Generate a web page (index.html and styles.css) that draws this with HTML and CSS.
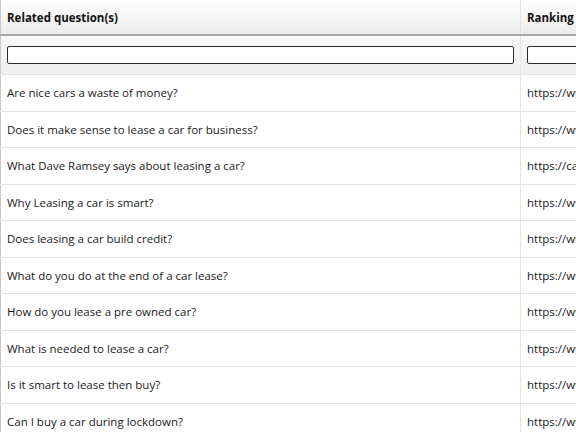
FILE: index.html
```html
<!DOCTYPE html>
<html>
<head>
<meta charset="utf-8">
<link rel="stylesheet" href="styles.css">
</head>
<body>
<table class="grid">
  <thead>
    <tr class="head">
      <th class="c1">Related question(s)</th>
      <th class="c2">Ranking</th>
    </tr>
    <tr class="filter">
      <td class="c1"><input class="box" type="text"></td>
      <td class="c2"><input class="box" type="text"></td>
    </tr>
  </thead>
  <tbody>
    <tr><td class="c1">Are nice cars a waste of money?</td><td class="c2">https://www.example.com/</td></tr>
    <tr><td class="c1">Does it make sense to lease a car for business?</td><td class="c2">https://www.example.com/</td></tr>
    <tr><td class="c1">What Dave Ramsey says about leasing a car?</td><td class="c2">https://cars.example.com/</td></tr>
    <tr><td class="c1">Why Leasing a car is smart?</td><td class="c2">https://www.example.com/</td></tr>
    <tr><td class="c1">Does leasing a car build credit?</td><td class="c2">https://www.example.com/</td></tr>
    <tr><td class="c1">What do you do at the end of a car lease?</td><td class="c2">https://www.example.com/</td></tr>
    <tr><td class="c1">How do you lease a pre owned car?</td><td class="c2">https://www.example.com/</td></tr>
    <tr><td class="c1">What is needed to lease a car?</td><td class="c2">https://www.example.com/</td></tr>
    <tr><td class="c1">Is it smart to lease then buy?</td><td class="c2">https://www.example.com/</td></tr>
    <tr><td class="c1">Can I buy a car during lockdown?</td><td class="c2">https://www.example.com/</td></tr>
  </tbody>
</table>
</body>
</html>
```
FILE: styles.css
```css
html, body {
  margin: 0;
  padding: 0;
  background: #fff;
  overflow: hidden;
}
body {
  width: 576px;
  height: 432px;
  font-family: "Open Sans", "DejaVu Sans", sans-serif;
  font-size: 11.5px;
  color: #1a1a1a;
}
.grid {
  border-collapse: collapse;
  table-layout: fixed;
  width: 800px;
  border-left: 1px solid #c8c8c8;
}
.c1 { width: 507px; }
.c2 { width: 280px; }
.grid th, .grid td {
  text-align: left;
  white-space: nowrap;
  overflow: hidden;
  padding: 0 6px;
  border-right: 1px solid #e4e4e4;
}
.head th {
  height: 34px;
  font-weight: bold;
  color: #111;
  background: linear-gradient(#ffffff, #ebebeb);
  border-bottom: 2px solid #a8a8a8;
}
.filter td {
  height: 38px;
  background: linear-gradient(#f7f7f7, #efefef);
  border-bottom: 1px solid #e4e4e4;
}
.box {
  display: block;
  box-sizing: border-box;
  width: 100%;
  height: 18px;
  margin: 0;
  border: 1px solid #2a2a2a;
  border-radius: 2px;
  background: #fff;
  padding: 0 3px;
}
tbody td {
  height: 35.5px;
  border-bottom: 1px solid #e4e4e4;
}
```
